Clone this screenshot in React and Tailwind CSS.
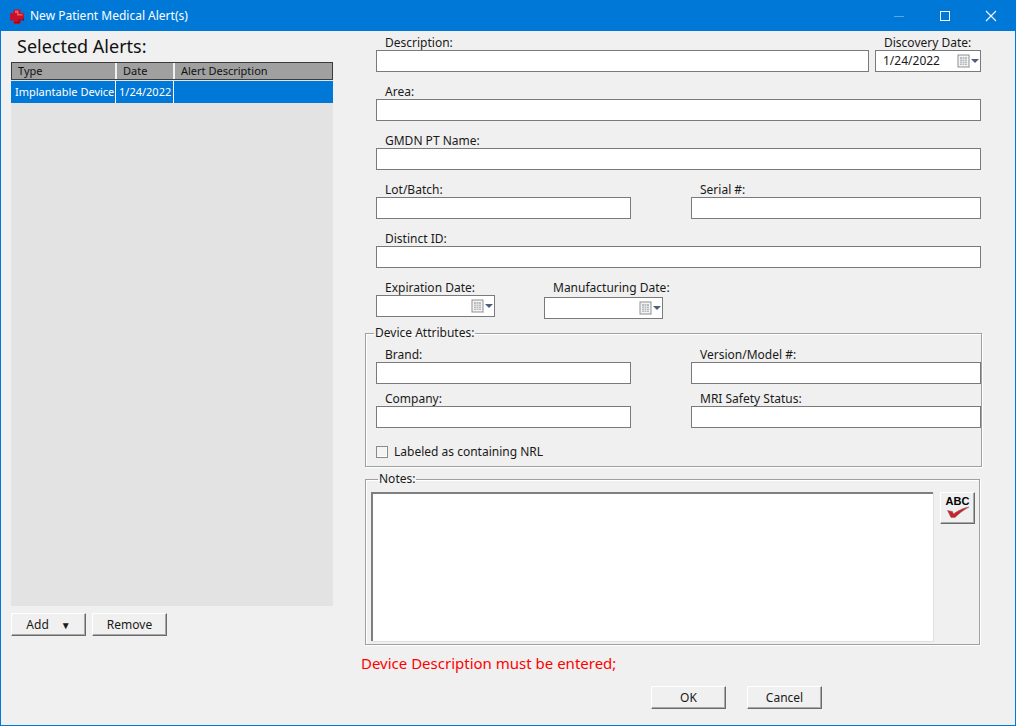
import React from "react";

const inputCls = "block h-[22px] bg-white border border-[#7a7a7a]";

function Field({ label, className = "", labelH = "h-[15px]", children }) {
  return (
    <div className={className}>
      <div className={`${labelH} pl-[10px] -ml-[1px] text-[12px] leading-[15px] text-[#1a1a1a] whitespace-nowrap`}>{label}</div>
      {children || <div className={`${inputCls} w-full`} />}
    </div>
  );
}

function CalIcon() {
  return (
    <svg width="22" height="14" viewBox="0 0 22 14" className="block">
      <rect x="1" y="1" width="11" height="12" fill="#f4f4f4" stroke="#8f8f8f" />
      <rect x="3" y="3" width="7" height="8" fill="#b9bcc2" />
      <path d="M3 5.5h7M3 7.5h7M3 9.5h7M5.5 3v8M7.5 3v8" stroke="#e6e6e6" strokeWidth="0.7" />
      <path d="M12.5 3v10.5H2" stroke="#c9c9c9" fill="none" />
      <path d="M14 5h8l-4 4z" fill="#4f5d80" />
    </svg>
  );
}

function DateBox({ value, className = "" }) {
  return (
    <div className={`${inputCls} flex items-center justify-between pl-[7px] pr-[1px] text-[12px] text-[#1a1a1a] ${className}`}>
      <span>{value}</span>
      <CalIcon />
    </div>
  );
}

function Btn({ children, className = "" }) {
  return (
    <button className={`block h-[23px] w-[75px] bg-[#f0f0f0] border-t border-l border-white border-r border-b border-r-[#6b6b6b] border-b-[#6b6b6b] shadow-[inset_-1px_-1px_0_#a8a8a8] text-[12px] text-[#1a1a1a] ${className}`}>
      {children}
    </button>
  );
}

export default function App() {
  return (
    <div className="w-[1016px] h-[726px] flex flex-col border border-[#0078d7] bg-[#f0f0f0] overflow-hidden font-['Noto_Sans',sans-serif]">
      <div className="h-[30px] shrink-0 bg-[#0078d7] flex items-center text-white text-[12px]">
        <svg width="16" height="16" viewBox="0 0 16 16" className="ml-[8px] mr-[5px] block">
          <path d="M5.5 1.5h5a1 1 0 0 1 1 1v2.5H14a1 1 0 0 1 1 1v4.5a1 1 0 0 1-1 1h-2.500V15a1 1 0 0 1-1 1h-5a1 1 0 0 1-1-1v-2.500H2a1 1 0 0 1-1-1V6a1 1 0 0 1 1-1h2.500V2.500a1 1 0 0 1 1-1z" fill="#c8102a" />
          <path d="M6 2.500h3.500v3.500H13.500v1.500H8V5H6z" fill="#ef5a5f" />
          <path d="M10.500 12.500V15H5.500v-1H9.500v-2.500h4.500v-1h1V12a.5.5 0 0 1-.5.5z" fill="#7d0a1c" />
        </svg>
        <span>New Patient Medical Alert(s)</span>
        <div className="ml-auto flex items-center pr-[18px]">
          <svg width="12" height="12" viewBox="0 0 12 12" className="block mr-[34px]"><path d="M1 6.500h10" stroke="#ffffff" strokeOpacity="0.35" /></svg>
          <svg width="12" height="12" viewBox="0 0 12 12" className="block mr-[34px]"><rect x="1.500" y="1.500" width="9" height="9" fill="none" stroke="#ffffff" /></svg>
          <svg width="12" height="12" viewBox="0 0 12 12" className="block"><path d="M1 1l10 10M11 1L1 11" stroke="#ffffff" strokeWidth="1.100" /></svg>
        </div>
      </div>

      <div className="flex flex-1 min-h-0">
        <div className="ml-[10px] w-[322px] shrink-0">
          <div className="h-[31px] pl-[6px] pt-[3px] text-[18px] leading-[24px] text-[#111]">Selected Alerts:</div>
          <div className="h-[544px] bg-[#e3e3e3] flex flex-col">
            <div className="h-[18px] flex bg-[#a0a0a0] border-y border-x border-[#3c3c3c] text-[11px] leading-[16px] text-[#111]">
              <div className="w-[105px] pl-[6px] border-r-2 border-[#f0f0f0]">Type</div>
              <div className="w-[58px] pl-[6px] border-r-2 border-[#f0f0f0]">Date</div>
              <div className="flex-1 pl-[6px]">Alert Description</div>
            </div>
            <div className="h-[22px] flex bg-[#0078d7] text-white text-[11px] leading-[22px] mt-[1px]">
              <div className="w-[105px] pl-[4px] border-r border-white whitespace-nowrap">Implantable Device</div>
              <div className="w-[58px] pl-[3px] border-r border-white">1/24/2022</div>
              <div className="flex-1" />
            </div>
          </div>
          <div className="flex gap-[6px] mt-[7px]">
            <Btn><span className="mr-[12px]">Add</span><span className="text-[10px]">▼</span></Btn>
            <Btn>Remove</Btn>
          </div>
        </div>

        <div className="ml-[32px] w-[615px] shrink-0">
          <div className="pl-[11px] pr-[-1px] w-[616px] pt-[4px]">
            <div className="flex">
              <Field label="Description:" className="w-[493px]" />
              <Field label="Discovery Date:" className="ml-[6px] w-[106px]">
                <DateBox value="1/24/2022" className="w-[106px]" />
              </Field>
            </div>
            <Field label="Area:" className="mt-[12px]" />
            <Field label="GMDN PT Name:" className="mt-[12px]" />
            <div className="flex mt-[12px]">
              <Field label="Lot/Batch:" className="w-[255px]" />
              <Field label="Serial #:" className="ml-[60px] w-[290px]" />
            </div>
            <Field label="Distinct ID:" className="mt-[12px]" />
            <div className="flex items-start mt-[12px]">
              <Field label="Expiration Date:" className="w-[119px]"><DateBox value="" /></Field>
              <Field label="Manufacturing Date:" labelH="h-[17px]" className="ml-[49px] w-[119px]"><DateBox value="" /></Field>
            </div>
          </div>

          <fieldset className="mt-[6px] w-[615px] h-[142px] border border-[#a0a0a0] shadow-[1px_1px_0_#ffffff,inset_1px_1px_0_#ffffff] pl-[10px]">
            <legend className="ml-[-2px] px-[1px] text-[12px] leading-[16px] text-[#1a1a1a]">Device Attributes:</legend>
            <div className="flex mt-[6px]">
              <Field label="Brand:" className="w-[255px]" />
              <Field label="Version/Model #:" className="ml-[60px] w-[290px]" />
            </div>
            <div className="flex mt-[7px]">
              <Field label="Company:" className="w-[255px]" />
              <Field label="MRI Safety Status:" className="ml-[60px] w-[290px]" />
            </div>
            <div className="flex items-center mt-[18px] h-[12px] text-[12px] text-[#1a1a1a]">
              <div className="w-[12px] h-[12px] bg-[#f4f4f4] border border-[#8a8a8a] shadow-[inset_-1px_-1px_0_#ffffff]" />
              <span className="ml-[6px]">Labeled as containing NRL</span>
            </div>
          </fieldset>

          <fieldset className="mt-[4px] w-[615px] h-[174px] border border-[#a0a0a0] shadow-[1px_1px_0_#ffffff,inset_1px_1px_0_#ffffff] pl-[5px]">
            <legend className="ml-[7px] px-[1px] text-[12px] leading-[16px] text-[#1a1a1a]">Notes:</legend>
            <div className="flex items-start mt-[5px]">
              <div className="w-[562px] h-[149px] bg-white border-t-2 border-l-2 border-[#7f7f7f] shadow-[1px_1px_0_#e0e0e0]" />
              <button className="ml-[7px] w-[35px] h-[32px] bg-[#f0f0f0] border-t border-l border-white border-r border-b border-r-[#6b6b6b] border-b-[#6b6b6b] shadow-[inset_-1px_-1px_0_#a8a8a8] flex flex-col items-center justify-start pt-[2px]">
                <span className="text-[11px] leading-[12px] font-bold text-black font-['Liberation_Sans',sans-serif]">ABC</span>
                <svg width="24" height="12" viewBox="0 0 24 12" className="block -mt-[1px]">
                  <path d="M1.500 4.500l5 1 1 2.500C11 5 16 2.500 23 1c-5.500 3-10 6.500-14 10.500H5z" fill="#cf2027" stroke="#7a6a6a" strokeWidth="0.500" />
                </svg>
              </button>
            </div>
          </fieldset>

          <div className="-ml-[4px] mt-[7px] h-[22px] text-[15px] leading-[22px] text-[#ff0000] whitespace-nowrap">Device Description must be entered;</div>
          <div className="flex gap-[21px] ml-[286px] mt-[12px]">
            <Btn>OK</Btn>
            <Btn>Cancel</Btn>
          </div>
        </div>
      </div>
    </div>
  );
}
